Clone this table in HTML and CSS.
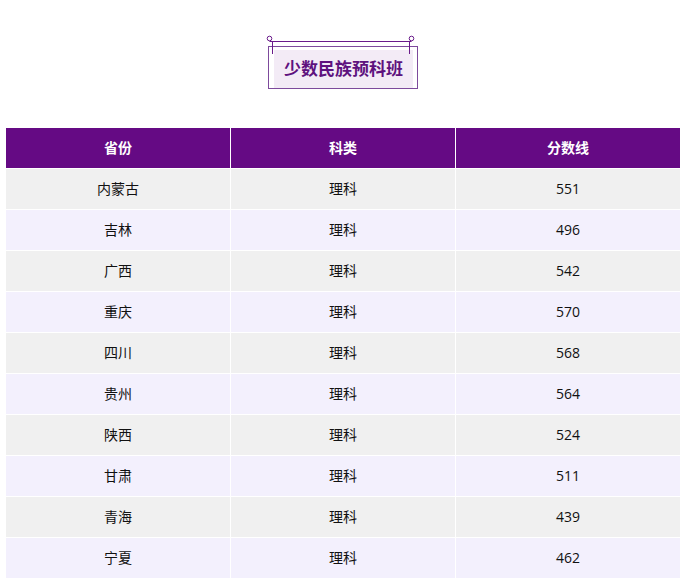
FILE: index.html
```html
<!DOCTYPE html>
<html lang="zh-CN">
<head>
<meta charset="utf-8">
<title>少数民族预科班</title>
<link rel="stylesheet" href="styles.css">
</head>
<body>
<div class="page">
  <div class="title-wrap">
    <div class="title-box">
      <svg class="title-deco" width="152" height="22" viewBox="0 0 152 22" aria-hidden="true">
        <circle cx="4.5" cy="3.5" r="2.3" fill="none" stroke="#6a1b8a" stroke-width="1"/>
        <circle cx="146.5" cy="3.5" r="2.3" fill="none" stroke="#6a1b8a" stroke-width="1"/>
        <line x1="4.5" y1="6.5" x2="146.5" y2="6.5" stroke="#6a1b8a" stroke-width="1"/>
        <line x1="7.5" y1="6" x2="7.5" y2="19" stroke="#6a1b8a" stroke-width="1"/>
        <line x1="144.5" y1="6" x2="144.5" y2="19" stroke="#6a1b8a" stroke-width="1"/>
      </svg>
      <div class="title-inner">少数民族预科班</div>
    </div>
  </div>
  <table class="score-table">
    <thead>
      <tr><th>省份</th><th>科类</th><th>分数线</th></tr>
    </thead>
    <tbody>
      <tr><td>内蒙古</td><td>理科</td><td>551</td></tr>
      <tr><td>吉林</td><td>理科</td><td>496</td></tr>
      <tr><td>广西</td><td>理科</td><td>542</td></tr>
      <tr><td>重庆</td><td>理科</td><td>570</td></tr>
      <tr><td>四川</td><td>理科</td><td>568</td></tr>
      <tr><td>贵州</td><td>理科</td><td>564</td></tr>
      <tr><td>陕西</td><td>理科</td><td>524</td></tr>
      <tr><td>甘肃</td><td>理科</td><td>511</td></tr>
      <tr><td>青海</td><td>理科</td><td>439</td></tr>
      <tr><td>宁夏</td><td>理科</td><td>462</td></tr>
    </tbody>
  </table>
</div>
</body>
</html>
```

FILE: styles.css
```css
html, body {
  margin: 0;
  padding: 0;
  background: #ffffff;
}
body {
  font-family: "Open Sans", "Noto Sans CJK SC", "Microsoft YaHei", sans-serif;
  color: #111;
}
.page {
  padding: 46px 2px 0 5px;
}
.title-wrap {
  display: flex;
  justify-content: center;
}
.title-box {
  position: relative;
  width: 148px;
  height: 41px;
  border: 1px solid #7d4a9c;
  box-sizing: content-box;
}
.title-deco {
  position: absolute;
  left: -4px;
  top: -12px;
}
.title-inner {
  margin: 3px 4px 0 5px;
  height: 38px;
  background: #f3ebf6;
  color: #5e127e;
  font-family: "Noto Sans CJK SC", sans-serif;
  font-weight: bold;
  font-size: 17px;
  line-height: 36px;
  text-align: center;
}
.score-table {
  margin-top: 38px;
  width: 676px;
  border-collapse: collapse;
  table-layout: fixed;
  font-size: 14px;
}
.score-table th,
.score-table td {
  border: 1px solid #ffffff;
  height: 38px;
  padding: 0 0 2px 0;
  text-align: center;
  vertical-align: middle;
}
.score-table th {
  background: #650a84;
  color: #ffffff;
  font-weight: bold;
}
.score-table tbody tr:nth-child(odd) td {
  background: #f0f0f0;
}
.score-table tbody tr:nth-child(even) td {
  background: #f3f0fd;
}
```
